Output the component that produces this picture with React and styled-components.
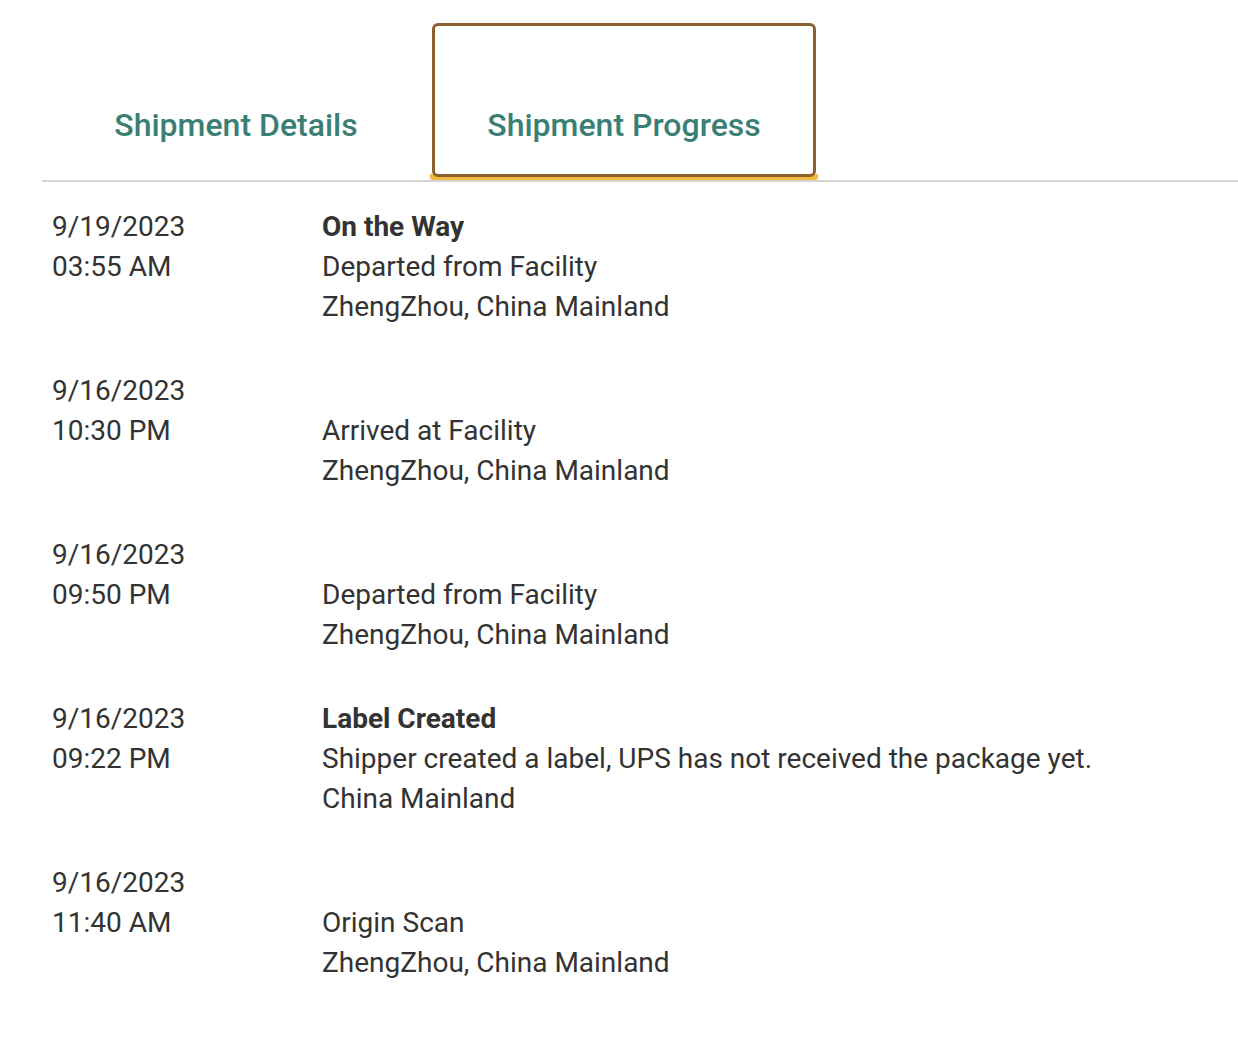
import styled, { createGlobalStyle } from "styled-components";

const GlobalStyle = createGlobalStyle`
  body {
    margin: 0;
    background: #ffffff;
    font-family: Roboto, "Liberation Sans", Arial, sans-serif;
  }
`;

const Page = styled.div`
  padding: 23px 0 0 42px;
`;

const TabBar = styled.div`
  display: flex;
  border-bottom: 2px solid #d4d4d4;
`;

const Tab = styled.button`
  position: relative;
  width: 388px;
  height: 157px;
  padding: 0 0 30px;
  border: none;
  border-bottom: 6px solid ${({ $active }) => ($active ? "#f2bd3c" : "transparent")};
  border-radius: 0 0 3px 3px;
  background: #ffffff;
  display: flex;
  align-items: flex-end;
  justify-content: center;
  font-family: Roboto, "Liberation Sans", Arial, sans-serif;
  font-size: 32px;
  font-weight: 500;
  color: #3a7f74;
  cursor: pointer;

  &::after {
    content: "";
    display: ${({ $active }) => ($active ? "block" : "none")};
    position: absolute;
    left: 2px;
    right: 2px;
    top: 0;
    bottom: -3px;
    border: 3px solid #8e6230;
    border-radius: 6px;
  }
`;

const List = styled.div`
  padding: 25px 0 0 10px;
  display: flex;
  flex-direction: column;
  gap: 44px;
`;

const Row = styled.div`
  display: grid;
  grid-template-columns: 270px 1fr;
  font-size: 28px;
  line-height: 40px;
  color: #333333;
`;

const Stamp = styled.div`
  display: flex;
  flex-direction: column;
`;

const Info = styled.div`
  display: flex;
  flex-direction: column;
`;

const Status = styled.div`
  font-weight: 700;
  min-height: 40px;
`;

const events = [
  { date: "9/19/2023", time: "03:55 AM", status: "On the Way", text: "Departed from Facility", place: "ZhengZhou, China Mainland" },
  { date: "9/16/2023", time: "10:30 PM", status: "", text: "Arrived at Facility", place: "ZhengZhou, China Mainland" },
  { date: "9/16/2023", time: "09:50 PM", status: "", text: "Departed from Facility", place: "ZhengZhou, China Mainland" },
  { date: "9/16/2023", time: "09:22 PM", status: "Label Created", text: "Shipper created a label, UPS has not received the package yet.", place: "China Mainland" },
  { date: "9/16/2023", time: "11:40 AM", status: "", text: "Origin Scan", place: "ZhengZhou, China Mainland" },
];

export default function App() {
  return (
    <Page>
      <GlobalStyle />
      <TabBar>
        <Tab>Shipment Details</Tab>
        <Tab $active>Shipment Progress</Tab>
      </TabBar>
      <List>
        {events.map((e, i) => (
          <Row key={i}>
            <Stamp>
              <span>{e.date}</span>
              <span>{e.time}</span>
            </Stamp>
            <Info>
              <Status>{e.status}</Status>
              <span>{e.text}</span>
              <span>{e.place}</span>
            </Info>
          </Row>
        ))}
      </List>
    </Page>
  );
}
